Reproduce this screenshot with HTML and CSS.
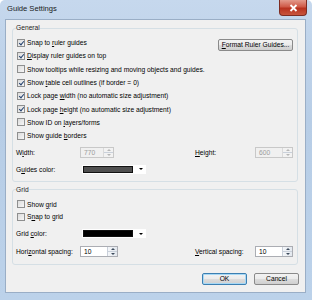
FILE: index.html
```html
<!DOCTYPE html>
<html lang="en">
<head>
  <meta charset="UTF-8">
  <title>Guide Settings</title>
  <link rel="stylesheet" href="styles.css">
</head>
<body>
  <div class="window">
    <div class="titlebar">
      <span class="title">Guide Settings</span>
      <span class="close">
        <svg width="9" height="8" viewBox="0 0 9 8"><path d="M1.5 1 L7.5 7 M7.5 1 L1.5 7" stroke="#fff" stroke-width="1.8"/></svg>
      </span>
    </div>

    <div class="client">
      <fieldset class="group general">
        <legend>General</legend>
        <div class="general-top">
          <div class="checks">
            <div class="check"><span class="box on"></span><span>Snap to <u>r</u>uler guides</span></div>
            <div class="check"><span class="box on"></span><span><u>D</u>isplay ruler guides on top</span></div>
            <div class="check"><span class="box"></span><span>Show tooltips while resizing and moving objects and guides.</span></div>
            <div class="check"><span class="box on"></span><span>Show <u>t</u>able cell outlines (if border = 0)</span></div>
            <div class="check"><span class="box on"></span><span>Lock page <u>w</u>idth (no automatic size adjustment)</span></div>
            <div class="check"><span class="box on"></span><span>Lock page <u>h</u>eight (no automatic size adjustment)</span></div>
            <div class="check"><span class="box"></span><span>Show ID on <u>l</u>ayers/forms</span></div>
            <div class="check"><span class="box"></span><span>Show guide <u>b</u>orders</span></div>
          </div>
          <button class="btn format"><u>F</u>ormat Ruler Guides...</button>
        </div>

        <div class="field-row size-row">
          <span class="field-label">W<u>i</u>dth:</span>
          <span class="spin disabled narrow">
            <span class="spin-value">770</span>
            <span class="spin-btns"><i class="up"></i><i class="down"></i></span>
          </span>
          <span class="field-label second"><u>H</u>eight:</span>
          <span class="spin disabled">
            <span class="spin-value">600</span>
            <span class="spin-btns"><i class="up"></i><i class="down"></i></span>
          </span>
        </div>

        <div class="field-row color-row">
          <span class="field-label">G<u>u</u>ides color:</span>
          <span class="combo"><span class="swatch grey"></span><span class="combo-arrow"></span></span>
        </div>
      </fieldset>

      <fieldset class="group grid">
        <legend>Grid</legend>
        <div class="check tight"><span class="box"></span><span>Show <u>g</u>rid</span></div>
        <div class="check tight"><span class="box"></span><span>S<u>n</u>ap to grid</span></div>

        <div class="field-row color-row grid-color">
          <span class="field-label">Grid <u>c</u>olor:</span>
          <span class="combo"><span class="swatch black"></span><span class="combo-arrow"></span></span>
        </div>

        <div class="field-row spacing-row">
          <span class="field-label">Hori<u>z</u>ontal spacing:</span>
          <span class="spin">
            <span class="spin-value">10</span>
            <span class="spin-btns"><i class="up"></i><i class="down"></i></span>
          </span>
          <span class="field-label second"><u>V</u>ertical spacing:</span>
          <span class="spin">
            <span class="spin-value">10</span>
            <span class="spin-btns"><i class="up"></i><i class="down"></i></span>
          </span>
        </div>
      </fieldset>

      <div class="actions">
        <button class="btn default">OK</button>
        <button class="btn">Cancel</button>
      </div>
    </div>
  </div>
</body>
</html>
```

FILE: styles.css
```css
body {
  margin: 0;
  font-family: "Liberation Sans", Arial, sans-serif;
  font-size: 6.7px;
  color: #000;
}

.window {
  width: 312px;
  height: 300px;
  box-sizing: border-box;
  display: flex;
  flex-direction: column;
  background: linear-gradient(#c6d8ed, #b7cde6 40%, #bcd2ea);
  border-radius: 5px 5px 0 0;
}

.titlebar {
  height: 19px;
  display: flex;
  align-items: flex-start;
  padding-left: 7px;
}

.title {
  font-size: 7.6px;
  margin-top: 4px;
  color: #1a1a1a;
}

.close {
  margin-left: auto;
  margin-right: 5px;
  width: 28px;
  height: 16px;
  box-sizing: border-box;
  display: flex;
  align-items: center;
  justify-content: center;
  background: linear-gradient(#e39a8c, #cf5a48 45%, #b8321f 55%, #c8553d);
  border: 1px solid #7e2c22;
  border-top: none;
  border-radius: 0 0 4px 4px;
}

.client {
  flex: 1;
  margin: 0 6px 7px 5px;
  background: #f0f0f0;
  border: 1px solid #9aaec6;
  display: flex;
  flex-direction: column;
}

.group {
  margin: 4px 7px 0 6px;
  padding: 4px 4px 7px 3px;
  border: 1px solid #d5dfe5;
  border-radius: 3px;
  min-width: 0;
}

.group legend {
  padding: 0;
  line-height: 8px;
  color: #1e1e1e;
}

.general-top {
  display: flex;
  justify-content: space-between;
  align-items: flex-start;
}

.check {
  height: 13.3px;
  display: flex;
  align-items: center;
  white-space: nowrap;
}

.check.tight {
  height: 12.5px;
}

.box {
  width: 8px;
  height: 8px;
  box-sizing: border-box;
  margin: 0 2px 0 1px;
  border: 1px solid #8e8f8f;
  background: linear-gradient(135deg, #dcdcdc, #f6f6f6);
  position: relative;
}

.box.on::after {
  content: "";
  position: absolute;
  left: 1.5px;
  top: 0;
  width: 2px;
  height: 4px;
  border: solid #24426f;
  border-width: 0 1.4px 1.4px 0;
  transform: rotate(40deg);
}

.btn {
  font-family: inherit;
  font-size: 6.7px;
  height: 12px;
  padding: 0;
  border: 1px solid #8a8a8a;
  border-radius: 2px;
  background: linear-gradient(#f2f2f2, #ebebeb 50%, #dddddd 50%, #cfcfcf);
  color: #000;
  line-height: 10px;
  white-space: nowrap;
}

.format {
  margin-top: 3px;
  width: 75px;
}

.field-row {
  display: flex;
  align-items: center;
}

.field-label {
  width: 64px;
  white-space: nowrap;
}

.field-label.second {
  width: 60px;
  margin-left: auto;
}

.size-row {
  margin-top: 4.5px;
}

.color-row {
  margin-top: 7px;
}

.grid-color {
  margin-top: 6.5px;
}

.spacing-row {
  margin-top: 8px;
}

.spin {
  width: 38px;
  height: 11px;
  box-sizing: border-box;
  display: flex;
  border: 1px solid #abadb3;
  background: #fff;
}

.spin.narrow {
  width: 34px;
}

.spin-value {
  flex: 1;
  padding-left: 3px;
  line-height: 9px;
}

.spin-btns {
  width: 9px;
  display: flex;
  flex-direction: column;
  background: linear-gradient(90deg, #f4f6f9, #e3e8ee);
  border-left: 1px solid #c9d0da;
}

.spin-btns i {
  flex: 1;
  display: flex;
  align-items: center;
  justify-content: center;
}

.spin-btns i::after {
  content: "";
  border-left: 2px solid transparent;
  border-right: 2px solid transparent;
}

.spin-btns .up {
  border-bottom: 1px solid #c9d0da;
}

.spin-btns .up::after {
  border-bottom: 2px solid #3d4b5c;
}

.spin-btns .down::after {
  border-top: 2px solid #3d4b5c;
}

.spin.disabled {
  background: #f0f0f0;
  border-color: #c8c8c8;
  color: #9c9c9c;
}

.spin.disabled .spin-btns {
  background: #f2f2f2;
  border-left-color: #dadada;
}

.spin.disabled .spin-btns i::after {
  border-top-color: #b5b5b5;
  border-bottom-color: #b5b5b5;
}

.combo {
  margin-left: 2px;
  width: 64px;
  height: 9px;
  display: flex;
  align-items: center;
  background: #fff;
}

.swatch {
  width: 50px;
  height: 7px;
  box-sizing: border-box;
  margin-left: 1px;
  border: 1px solid #111;
}

.swatch.grey {
  background: #4f4f4f;
}

.swatch.black {
  background: #000;
}

.combo-arrow {
  margin-left: 6px;
  border-left: 2px solid transparent;
  border-right: 2px solid transparent;
  border-top: 2px solid #000;
}

.actions {
  display: flex;
  justify-content: flex-end;
  gap: 7px;
  margin: 8px 6px 0 0;
}

.actions .btn {
  width: 45px;
}

.btn.default {
  border-color: #3c7fb1;
  box-shadow: inset 0 0 0 1px #a7d8f5;
}
```
